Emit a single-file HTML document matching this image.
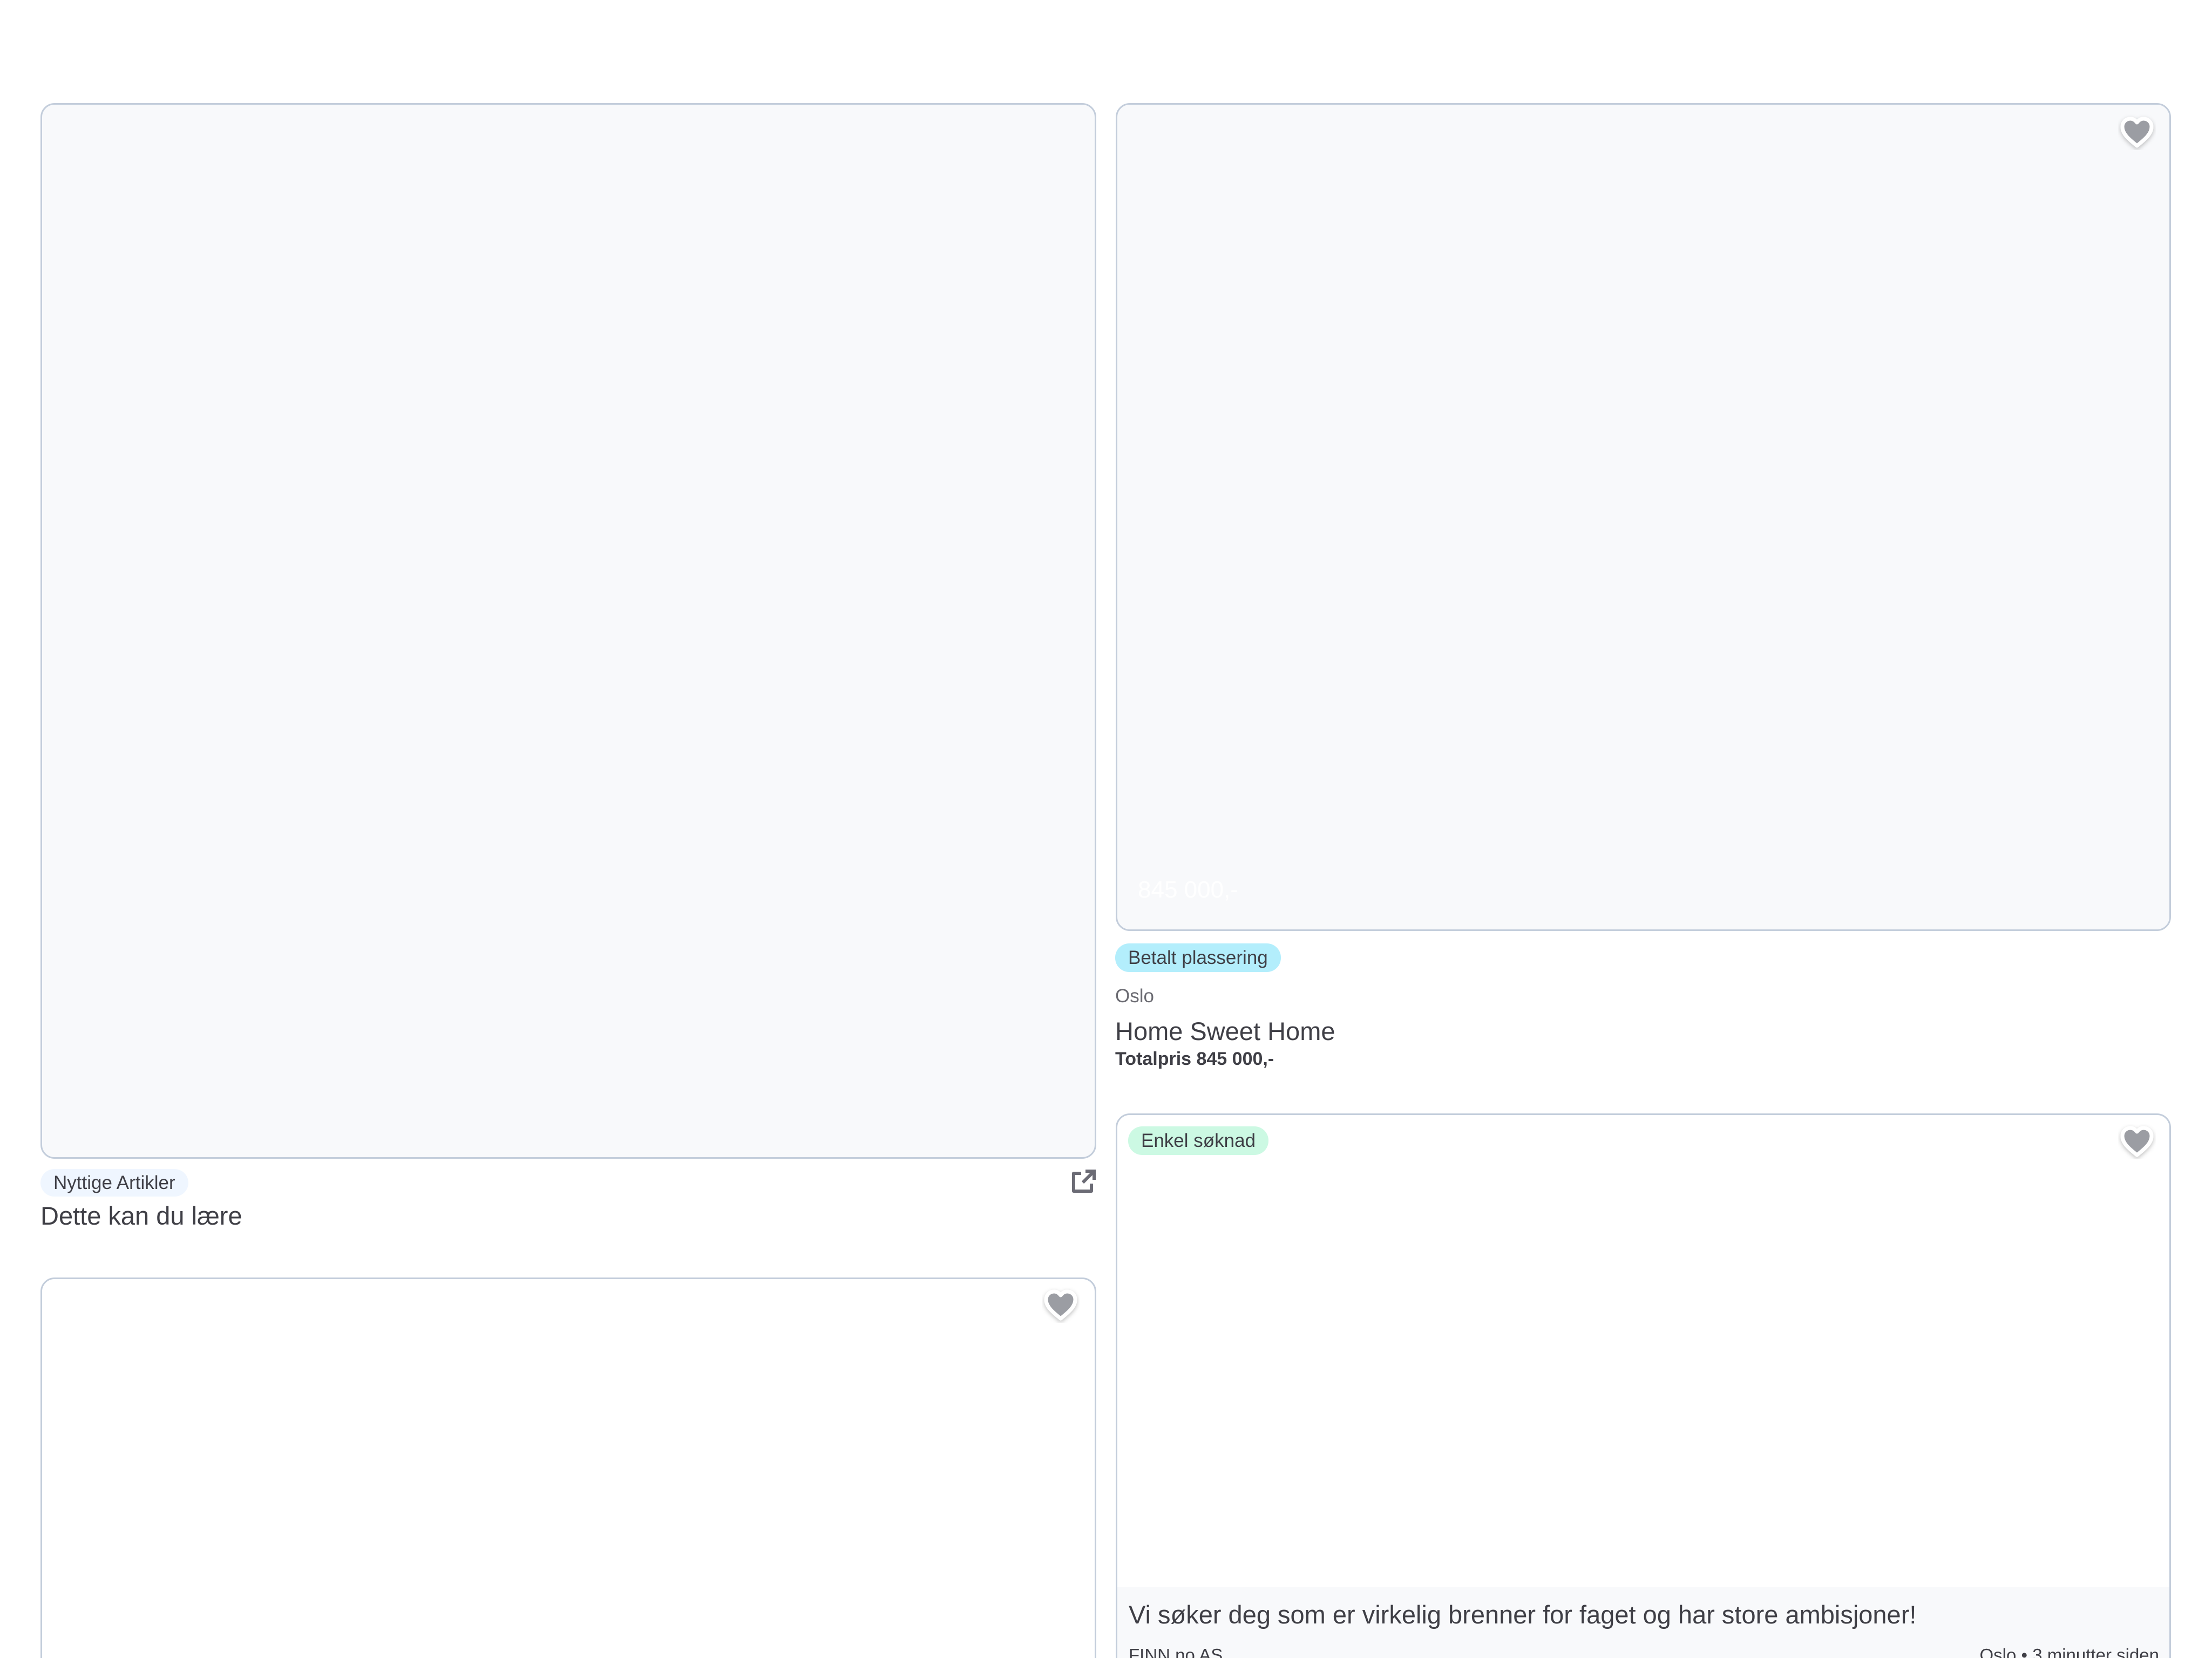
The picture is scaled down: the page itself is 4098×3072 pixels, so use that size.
<!DOCTYPE html>
<html><head><meta charset="utf-8"><style>
*{margin:0;padding:0;box-sizing:border-box}
html,body{width:4098px;height:3072px;overflow:hidden;background:#fff}
body{font-family:"Liberation Sans",sans-serif;color:#3f3f46}
#wrap{position:relative;width:4098px;height:3072px;overflow:hidden}
.card{position:absolute;border:3px solid #c3cddb;border-radius:26px;background:#f8f9fb;overflow:hidden}
.abs{position:absolute;white-space:nowrap}
.badge{position:absolute;border-radius:26px;font-size:35px;line-height:53px;height:53px;padding:0 24px;white-space:nowrap}
.heart{position:absolute;width:70px;height:66px}
</style></head><body><div id="wrap">
<svg width="0" height="0" style="position:absolute"><defs><filter id="sh" x="-30%" y="-30%" width="160%" height="160%"><feDropShadow dx="0" dy="3" stdDeviation="4" flood-color="#000" flood-opacity="0.25"/></filter></defs></svg>

<div class="card" style="left:75px;top:191px;width:1956px;height:1956px"></div>
<div class="badge" style="left:75px;top:2166px;background:#eff6ff;line-height:51px;height:51px">Nyttige Artikler</div>
<svg class="abs" style="left:1983px;top:2165px" width="48" height="48" viewBox="0 0 48 48"><path d="M20 9H6v33h33V28" fill="none" stroke="#6b6b75" stroke-width="6" stroke-linejoin="round"/><path d="M23 26L42 7M28 5h16v16" fill="none" stroke="#6b6b75" stroke-width="6"/></svg>
<div class="abs" style="left:75px;top:2225px;font-size:47px;color:#3f3f46">Dette kan du lære</div>

<div class="card" style="left:75px;top:2367px;width:1956px;height:800px;background:#fff"></div>
<svg class="heart" style="left:1930px;top:2385px" viewBox="0 0 70 66"><path d="M35 58C20 46 8 36 8 23 8 14 15 8 23 8c5 0 9 3 12 7 3-4 7-7 12-7 8 0 15 6 15 15 0 13-12 23-27 35z" fill="#9b9da3" stroke="#fff" stroke-width="7" stroke-linejoin="round" filter="url(#sh)"/></svg>

<div class="card" style="left:2067px;top:191px;width:1955px;height:1534px"></div>
<div class="abs" style="left:2108px;top:1624px;font-size:44px;color:#fff">845 000,-</div>
<svg class="heart" style="left:3924px;top:212px" viewBox="0 0 70 66"><path d="M35 58C20 46 8 36 8 23 8 14 15 8 23 8c5 0 9 3 12 7 3-4 7-7 12-7 8 0 15 6 15 15 0 13-12 23-27 35z" fill="#9b9da3" stroke="#fff" stroke-width="7" stroke-linejoin="round" filter="url(#sh)"/></svg>
<div class="badge" style="left:2066px;top:1748px;background:#b3eefc">Betalt plassering</div>
<div class="abs" style="left:2066px;top:1826px;font-size:35px;color:#6b6b72">Oslo</div>
<div class="abs" style="left:2066px;top:1883px;font-size:47px;color:#3f3f46">Home Sweet Home</div>
<div class="abs" style="left:2066px;top:1943px;font-size:34px;font-weight:bold;color:#3f3f46">Totalpris 845 000,-</div>

<div class="card" style="left:2067px;top:2063px;width:1955px;height:1100px;background:#fff">
  <div style="position:absolute;left:0;right:0;top:874px;bottom:0;background:#f8f9fb"></div>
</div>
<div class="badge" style="left:2090px;top:2087px;background:#ccf9e3">Enkel søknad</div>
<svg class="heart" style="left:3924px;top:2082px" viewBox="0 0 70 66"><path d="M35 58C20 46 8 36 8 23 8 14 15 8 23 8c5 0 9 3 12 7 3-4 7-7 12-7 8 0 15 6 15 15 0 13-12 23-27 35z" fill="#9b9da3" stroke="#fff" stroke-width="7" stroke-linejoin="round" filter="url(#sh)"/></svg>
<div class="abs" style="left:2091px;top:2964px;font-size:47px;color:#3f3f46">Vi søker deg som er virkelig brenner for faget og har store ambisjoner!</div>
<div class="abs" style="left:2091px;top:3048px;font-size:33px;color:#3f3f46">FINN.no AS</div>
<div class="abs" style="right:98px;top:3048px;font-size:33px;color:#3f3f46">Oslo • 3 minutter siden</div>
</div></body></html>
